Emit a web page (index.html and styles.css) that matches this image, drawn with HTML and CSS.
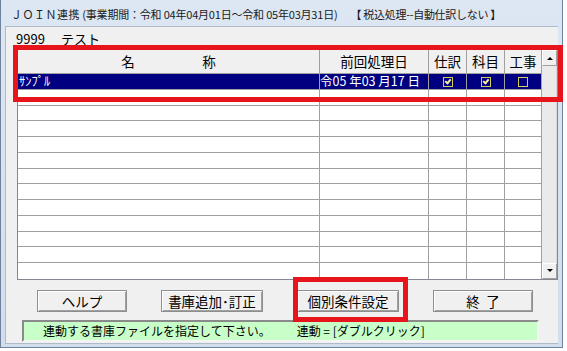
FILE: index.html
```html
<!DOCTYPE html>
<html lang="ja">
<head>
    <meta charset="UTF-8">
    <title>JOIN連携</title>
    <link rel="stylesheet" href="styles.css">
</head>
<body>
<div class="window">
    <div class="titlebar"><span class="app">ＪＯＩＮ連携</span> (事業期間：令和 04年04月01日～令和 05年03月31日)<span class="tax">【 税込処理--自動仕訳しない 】</span></div>

    <div class="client">
        <div class="company"><span>9999</span><span class="company-name">テスト</span></div>

        <!-- 書庫一覧 -->
        <div class="grid">
            <table class="list">
                <colgroup>
                    <col class="c-name">
                    <col class="c-date">
                    <col class="c-flag">
                    <col class="c-flag">
                    <col class="c-last">
                </colgroup>
                <thead>
                <tr>
                    <th>名　　　　　称</th>
                    <th>前回処理日</th>
                    <th>仕訳</th>
                    <th>科目</th>
                    <th>工事</th>
                </tr>
                </thead>
                <tbody>
                <tr class="selected">
                    <td class="name">ｻﾝﾌﾟﾙ</td>
                    <td class="date">令05 年03 月17 日</td>
                    <td class="flag"><span class="box checked"></span></td>
                    <td class="flag"><span class="box checked"></span></td>
                    <td class="flag"><span class="box"></span></td>
                </tr>
                <tr><td></td><td></td><td></td><td></td><td></td></tr>
                <tr><td></td><td></td><td></td><td></td><td></td></tr>
                <tr><td></td><td></td><td></td><td></td><td></td></tr>
                <tr><td></td><td></td><td></td><td></td><td></td></tr>
                <tr><td></td><td></td><td></td><td></td><td></td></tr>
                <tr><td></td><td></td><td></td><td></td><td></td></tr>
                <tr><td></td><td></td><td></td><td></td><td></td></tr>
                <tr><td></td><td></td><td></td><td></td><td></td></tr>
                <tr><td></td><td></td><td></td><td></td><td></td></tr>
                <tr><td></td><td></td><td></td><td></td><td></td></tr>
                <tr><td></td><td></td><td></td><td></td><td></td></tr>
                <tr class="last"><td></td><td></td><td></td><td></td><td></td></tr>
                </tbody>
            </table>
            <div class="scrollbar">
                <div class="sb-button"><span class="arrow-up"></span></div>
                <div class="sb-track"></div>
                <div class="sb-button"><span class="arrow-down"></span></div>
            </div>
        </div>

        <div class="buttons">
            <button class="btn btn-help">ヘルプ</button>
            <button class="btn btn-wide">書庫追加･訂正</button>
            <button class="btn btn-wide">個別条件設定</button>
            <button class="btn btn-end">終&ensp;了</button>
        </div>

        <div class="status">連動する書庫ファイルを指定して下さい。<span class="hint">連動 = [ダブルクリック]</span></div>
    </div>

    <!-- 赤枠 (注記) -->
    <div class="mark mark-list"></div>
    <div class="mark mark-button"></div>
</div>
</body>
</html>
```

FILE: styles.css
```css
body {
    margin: 0;
    background: #ffffff;
    font-family: "Noto Sans CJK JP", "Noto Sans", sans-serif;
    color: #000000;
}
.window {
    position: relative;
    width: 563px;
    height: 348px;
    box-sizing: border-box;
    display: flex;
    flex-direction: column;
    border: 1px solid #6f829b;
    border-top: none;
    background: linear-gradient(#dde7f3, #d2deed);
    padding: 0 4px 3px 4px;
}
.titlebar {
    height: 26px;
    padding-left: 6px;
    font-size: 11px;
    line-height: 28px;
    letter-spacing: -0.2px;
    white-space: nowrap;
    color: #1a1a1a;
}
.titlebar .app {
    letter-spacing: 0.5px;
}
.titlebar .tax {
    margin-left: 13px;
    letter-spacing: -0.3px;
}
.client {
    flex: 1;
    background: #f0f0f0;
    border: 1px solid #aebbcc;
    border-right: none;
}
.company {
    margin-top: 5px;
    padding-left: 10px;
    font-size: 13px;
    line-height: 14px;
}
.company-name {
    margin-left: 16px;
}

/* list */
.grid {
    display: flex;
    width: 541px;
    box-sizing: border-box;
    margin: 3px 0 0 11px;
    border: 1px solid #828790;
    background: #ffffff;
}
.list {
    width: 524px;
    table-layout: fixed;
    border-collapse: separate;
    border-spacing: 0;
}
.c-name { width: 302px; }
.c-date { width: 109px; }
.c-flag { width: 38px; }
.c-last { width: 37px; }
.list th {
    height: 23px;
    padding: 0;
    background: #f0f0f0;
    border-right: 1px solid #a0a0a0;
    border-bottom: 1px solid #a0a0a0;
    font-size: 13.5px;
    font-weight: normal;
    line-height: 23px;
    text-align: center;
    white-space: nowrap;
}
.list tr {
    height: 15.75px;
}
.list td {
    padding: 0;
    border-right: 1px solid #a0a0a0;
    border-bottom: 1px solid #a0a0a0;
    font-size: 12.5px;
    line-height: 14px;
    white-space: nowrap;
}
.list tr.last td {
    border-bottom: none;
}
.list tr.selected td {
    background: #000080;
    color: #ffffff;
}
.list td.name {
    padding-left: 1px;
}
.list td.date {
    text-align: right;
    padding-right: 8px;
}
.list td.flag {
    text-align: center;
}
.box {
    display: inline-block;
    width: 8px;
    height: 8px;
    border: 1px solid #d6cc5c;
    vertical-align: -1px;
    position: relative;
}
.box.checked::after {
    content: "";
    position: absolute;
    left: 2px;
    top: 0;
    width: 2px;
    height: 4px;
    border-right: 2px solid #f4f0a8;
    border-bottom: 2px solid #f4f0a8;
    transform: rotate(40deg);
}

/* scrollbar */
.scrollbar {
    width: 15px;
    display: flex;
    flex-direction: column;
    background: #eaeaea;
}
.sb-button {
    height: 16px;
    box-sizing: border-box;
    display: flex;
    align-items: center;
    justify-content: center;
    background: #f0f0f0;
    border: 1px solid;
    border-color: #ffffff #a0a0a0 #a0a0a0 #ffffff;
}
.sb-track {
    flex: 1;
    border-right: 1px solid #d8d8d8;
}
.arrow-up, .arrow-down {
    width: 0;
    height: 0;
    border-left: 3px solid transparent;
    border-right: 3px solid transparent;
}
.arrow-up {
    border-bottom: 3px solid #000000;
}
.arrow-down {
    border-top: 3px solid #000000;
}

/* buttons */
.buttons {
    display: flex;
    gap: 34px;
    margin: 10px 0 0 31px;
}
.btn {
    height: 22px;
    padding: 0;
    background: #f0f0f0;
    border: 1px solid #8e8e8e;
    box-shadow: inset 1px 1px #ffffff, inset -1px -1px #a0a0a0;
    font-family: "Noto Sans CJK JP", "Noto Sans", sans-serif;
    font-size: 13.5px;
    line-height: 20px;
    color: #000000;
}
.btn-help { width: 90px; }
.btn-wide { width: 102px; }
.btn-end { width: 100px; }

/* status */
.status {
    width: 517px;
    height: 22px;
    box-sizing: border-box;
    margin: 8px 0 0 16px;
    padding-left: 19px;
    background: #c8ffc8;
    border: 2px solid;
    border-color: #8a8a8a #f4f4f4 #f4f4f4 #8a8a8a;
    font-size: 12px;
    line-height: 18px;
    white-space: nowrap;
}
.status .hint {
    margin-left: 26px;
}

/* annotation */
.mark {
    position: absolute;
    box-sizing: border-box;
    border: 5px solid #e8141c;
}
.mark-list {
    left: 12px;
    top: 45px;
    width: 550px;
    height: 57px;
}
.mark-button {
    left: 292px;
    top: 277px;
    width: 115px;
    height: 45px;
}
```
